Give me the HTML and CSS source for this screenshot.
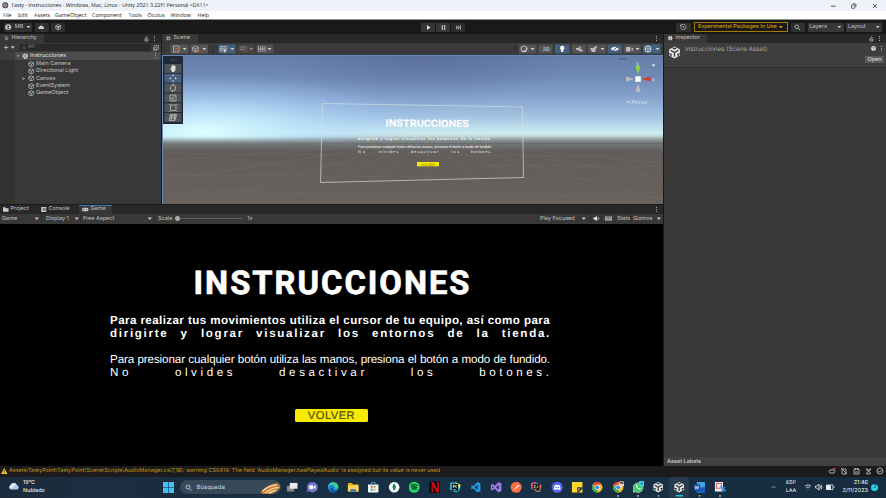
FILE: index.html
```html
<!DOCTYPE html>
<html lang="es">
<head>
<meta charset="utf-8">
<title>Tasty - Instrucciones</title>
<link rel="stylesheet" href="styles.css">
</head>
<body>
<svg class="defs" aria-hidden="true">
  <symbol id="cube" viewBox="0 0 14 14"><path d="M7 1.2 12.3 4v6L7 12.8 1.7 10V4ZM1.7 4 7 7l5.3-3M7 7v5.8" fill="none" stroke="currentColor" stroke-width="1.5"/></symbol>
  <symbol id="unity" viewBox="0 0 24 24"><path d="M12 1 22 6.5v11L12 23 2 17.500V6.500Z" fill="currentColor"/><path d="M12 12v8M12 12 5 8M12 12l7-4M9 3.500l3 2 3-2M2.500 14l3 1v4M21.500 14l-3 1v4" fill="none" stroke="var(--cut,#383838)" stroke-width="2.400"/></symbol>
  <symbol id="lock" viewBox="0 0 10 12"><path d="M2 6h6v4H2ZM3.500 6V3.500a1.800 1.800 0 0 1 3.500-.5" fill="none" stroke="currentColor" stroke-width="1.400"/></symbol>
  <symbol id="lens" viewBox="0 0 14 14"><circle cx="6" cy="6" r="4" fill="none" stroke="currentColor" stroke-width="1.600"/><path d="m9 9 4 4" stroke="currentColor" stroke-width="1.800"/></symbol>
  <symbol id="chrome" viewBox="0 0 24 24"><circle cx="12" cy="12" r="11" fill="#fbc116"/><path d="M12 12 2.500 6.500A11 11 0 0 1 21.500 6.500H12Z" fill="#ea4335"/><path d="M2.500 6.500A11 11 0 0 0 11 23l5-9-8 0Z" fill="#34a853"/><circle cx="12" cy="12" r="5.400" fill="#fff"/><circle cx="12" cy="12" r="4.200" fill="#4285f4"/></symbol>
</svg>

<header class="titlebar">
  <svg class="app-icon" viewBox="0 0 24 24"><circle cx="12" cy="12" r="11" fill="#333"/><path d="M12 5 18 8.500v7L12 19l-6-3.500v-7ZM12 12v7M6 8.500l6 3.500 6-3.500" stroke="#eee" stroke-width="2" fill="none"/></svg>
  <span class="app-title">Tasty - Instrucciones - Windows, Mac, Linux - Unity 2021.3.22f1 Personal &lt;DX11&gt;</span>
  <svg class="window-buttons" viewBox="0 0 50 10" fill="none" stroke="#333" stroke-width=".8"><path d="M2 5.200h4.600M44 3l4 4M48 3l-4 4"/><rect x="22.500" y="4" width="3.300" height="3.300" rx=".6"/><path d="M23.800 2.800h2.300q.8 0 .8.800v2.400"/></svg>
</header>
<nav class="menubar"><span>File</span><span>Edit</span><span>Assets</span><span>GameObject</span><span>Component</span><span>Tools</span><span>Oculus</span><span>Window</span><span>Help</span></nav>

<div class="toolbar">
  <div class="tb user"><svg viewBox="0 0 12 12"><circle cx="6" cy="6" r="5.500" fill="#c8c8c8"/><circle cx="6" cy="4.600" r="1.900" fill="#333"/><path d="M2.800 9.500q3.200-4 6.400 0" fill="#333"/></svg><span>MR</span><i class="caret"></i></div>
  <div class="tb cloud"><svg viewBox="0 0 14 10"><path d="M3 9a2.500 2.500 0 0 1 0-5 4 4 0 0 1 7.500-.5A2.800 2.800 0 0 1 11 9Z" fill="#d0d0d0"/></svg></div>
  <div class="tb vcs"><svg viewBox="0 0 14 14"><use href="#cube"/><circle cx="7" cy="7" r="2.500" fill="#bbb"/></svg></div>
  <div class="transport">
    <div><svg viewBox="0 0 10 10"><path d="M2 0 9 5 2 10Z" fill="#ddd"/></svg></div>
    <div><svg viewBox="0 0 10 10"><path d="M1.500 0h2.500v10H1.500ZM6 0h2.500v10H6Z" fill="#bbb"/></svg></div>
    <div class="dim"><svg viewBox="0 0 10 10"><path d="M0 0 4 5 0 10ZM4 0 8 5 4 10ZM8 0h2v10H8Z" fill="#9a9a9a"/></svg></div>
  </div>
  <div class="tb history"><svg viewBox="0 0 14 14" fill="none" stroke="#c4c4c4" stroke-width="1.500"><path d="M2 3a6 6 0 1 1-.8 5M1 1v4h4M7 4v3.500l3 1"/></svg></div>
  <div class="experimental"><span>Experimental Packages In Use</span><i class="caret"></i></div>
  <div class="tb search"><svg viewBox="0 0 14 14"><use href="#lens"/></svg></div>
  <div class="tb drop layers"><span>Layers</span><i class="caret"></i></div>
  <div class="tb drop layout"><span>Layout</span><i class="caret"></i></div>
</div>

<main class="editor">
  <div class="workspace">
    <div class="upper">
      <section class="hierarchy">
        <div class="tabs"><div class="tab hier-tab"><svg viewBox="0 0 12 10"><path d="M0 1.500h10M3 5h8M3 8.500h8" stroke="#bbb" stroke-width="1.500"/></svg><span>Hierarchy</span></div><svg class="lock"><use href="#lock"/></svg><i class="dots"></i></div>
        <div class="hier-bar"><b>+</b><i class="caret"></i><div class="field"><svg viewBox="0 0 14 14"><use href="#lens"/></svg><span>All</span></div><svg class="pick" viewBox="0 0 12 12" fill="none" stroke="#aaa" stroke-width="1.300"><path d="M3 1h8v8H3ZM1 4v7h7"/><circle cx="7" cy="5" r="1.800"/></svg></div>
        <div class="tree">
          <div class="row scene-row"><i class="fold down"></i><svg><use href="#unity"/></svg><span>Instrucciones</span><i class="dots"></i></div>
          <div class="row"><i class="fold"></i><svg><use href="#cube"/></svg><span>Main Camera</span></div>
          <div class="row"><i class="fold"></i><svg><use href="#cube"/></svg><span>Directional Light</span></div>
          <div class="row"><i class="fold right"></i><svg><use href="#cube"/></svg><span>Canvas</span></div>
          <div class="row"><i class="fold"></i><svg><use href="#cube"/></svg><span>EventSystem</span></div>
          <div class="row"><i class="fold"></i><svg><use href="#cube"/></svg><span>GameObject</span></div>
        </div>
      </section>
      <section class="scene">
        <div class="tabs"><div class="tab scene-tab"><svg viewBox="0 0 10 10"><path d="M0 3h10M0 7h10M3 0v10M7 0v10" stroke="#bbb" stroke-width="1.400"/></svg><span>Scene</span></div><i class="dots"></i></div>
        <div class="scene-bar">
          <svg class="left-tools" viewBox="0 0 110 10">
            <path d="M1 2v6M49 2v6" stroke="#292929"/>
            <path fill="#555" d="M6.500.5h18v9h-18ZM26.500.5H44v9H26.500Z"/><path fill="#46607c" d="M54.500.5h17v9h-17Z"/><path fill="#444" d="M73.500.5h17v9h-17Z"/><path fill="#505050" d="M92.500.5h17v9h-17Z"/>
            <g fill="none" stroke="#c4c4c4" stroke-width=".7"><rect x="9.500" y="2" width="5.500" height="6"/><path d="m31.500 2 2.800 1.500v3L31.500 8l-2.800-1.500v-3ZM28.700 3.500l2.800 1.500 2.800-1.500M31.500 5v3M56 2.500h6.500V6M56 2.500V7h3.500M58 2.500V7M60.200 2.500V5M56 4.700h5M94.500 2v6M101 2v6M96.800 2v6M98.800 2v6M94.500 5h6.500"/></g>
            <path d="M59.500 5.500h3.500L60.500 9Z" fill="#ddd"/><circle cx="12.300" cy="5" r="1.500" fill="#c0563b"/><circle cx="33.700" cy="7" r="1.400" fill="#d36a4c"/><path d="M77 2v5M79.500 2v4M82 2v3M75.500 3h7M75.500 5.500h5" stroke="#888" stroke-width=".6"/><path d="M80 5.500v1q1.400 2 2.800 0v-1" stroke="#a65542" fill="none"/>
            <path d="M18.600 4h4L20.600 6.300ZM38.300 4h4L40.300 6.300ZM66.300 4h4L68.300 6.300ZM103.500 4h4L105.500 6.300Z" fill="#ccc"/><path d="M85.300 4h4L87.300 6.300Z" fill="#888"/>
          </svg>
          <svg class="right-tools" viewBox="0 0 148 10">
            <path d="M1 2v6" stroke="#292929"/>
            <path d="M5 .5h17.500v9H5ZM24.500.5h14v9h-14ZM58 .5h14v9H58ZM73.500.5H92v9H73.500ZM109.500.5H127v9h-17.500Z" fill="#535353"/><path d="M41 .5h14.500v9H41ZM93.500.5h14.500v9H93.500ZM129 .5h17.500v9H129Z" fill="#46607c"/>
            <circle cx="10" cy="5" r="3" fill="none" stroke="#ccc" stroke-width=".8"/><path d="M8 7.200q4 .8 5-3.500" stroke="#ddd" fill="none"/>
            <text x="28.800" y="7">2D</text><circle cx="48.200" cy="4" r="2.200" fill="#fff"/><path d="M47.200 5.500h2V8h-2Z" fill="#fff"/>
            <path d="M62 4h2l2.500-1.800V8L64 6h-2Z" fill="#bbb"/><circle cx="67.500" cy="6.500" r="1.200" fill="#bbb"/><path d="M76 4h3l2-1.500 1 2.500-1 3h-3Z" fill="#bbb"/><circle cx="82" cy="3" r="1.100" fill="#bbb"/>
            <path d="M96.500 5q4.300-4.500 8.600 0-4.300 4-8.600 0Z" fill="#eee"/><path d="m98 8 6-6" stroke="#46607c" stroke-width="1"/><path d="M112 3h4.500v4.500H112Zm5 2 2-1.600v3.800Z" fill="#bbb"/><circle cx="134" cy="5" r="3" fill="none" stroke="#e3e8ee" stroke-width=".9"/><path d="M131 5h6M134 2v6" stroke="#e3e8ee" stroke-width=".6"/>
            <path d="M16.500 4h4L18.500 6.300ZM86.500 4h4L88.500 6.300ZM121.500 4h4L123.500 6.300ZM141.500 4h4L143.500 6.300Z" fill="#ccc"/>
          </svg>
        </div>
        <div class="viewport">
          <svg class="world" viewBox="163 55.500 501 150" preserveAspectRatio="none">
            <defs>
              <linearGradient id="sky" x1="0" y1="0" x2="0" y2="1"><stop offset="0" stop-color="#667da7"/><stop offset=".25" stop-color="#6f8ab6"/><stop offset=".5" stop-color="#87a5d0"/><stop offset=".7" stop-color="#a3c3e2"/><stop offset=".84" stop-color="#c3e4ee"/><stop offset=".89" stop-color="#cdebee"/><stop offset=".94" stop-color="#aebfc1"/><stop offset="1" stop-color="#747878"/></linearGradient>
              <radialGradient id="glow" gradientUnits="userSpaceOnUse" cx="0" cy="0" r="1" gradientTransform="translate(205 131) scale(210 58)"><stop offset="0" stop-color="#ddffff"/><stop offset=".35" stop-color="#c3ecff" stop-opacity=".75"/><stop offset="1" stop-color="#9cc9ff" stop-opacity="0"/></radialGradient>
              <radialGradient id="shade" gradientUnits="userSpaceOnUse" cx="0" cy="0" r="1" gradientTransform="translate(425 50) scale(150 55)"><stop offset="0" stop-color="#4a5e88" stop-opacity=".45"/><stop offset="1" stop-color="#4a5e88" stop-opacity="0"/></radialGradient>
              <linearGradient id="ground" x1="0" y1="0" x2="0" y2="1"><stop offset="0" stop-color="#747878"/><stop offset=".12" stop-color="#625d5a"/><stop offset="1" stop-color="#69625d"/></linearGradient>
              <linearGradient id="haze" x1="0" y1="0" x2="0" y2="1"><stop offset="0" stop-color="#8b9696" stop-opacity="0"/><stop offset="1" stop-color="#747878"/></linearGradient>
            </defs>
            <path fill="url(#sky)" d="M162 54h503v89H162Z"/><path fill="url(#glow)" d="M162 54h503v89H162Z"/><path fill="url(#shade)" d="M162 54h503v70H162Z"/><path fill="url(#haze)" d="M162 136h503v7H162Z"/><path fill="url(#ground)" d="M162 143h503v64H162Z"/>
            <g fill="none" stroke="#77716c" stroke-width=".5" opacity=".75"><path d="M162 160 380 145M162 180 390 145M190 206 400 145M270 206 410 145M345 206 418 145M430 206 428 145M510 206 436 145M590 206 445 145M665 200 455 145M665 178 465 145M665 163 480 145"/><path d="M162 153 665 156M162 163 665 166M162 174 665 179M162 190 665 197"/></g>
            <path d="M322.500 103 522.500 106.500 523.500 177 320.500 182Z" fill="none" stroke="#d6dde2" stroke-opacity=".75" stroke-width=".9"/>
            <g class="world-text">
              <text class="wt-title" x="385.500" y="126" textLength="83.500" lengthAdjust="spacingAndGlyphs" transform="rotate(.4 385 126)">INSTRUCCIONES</text>
              <text class="wt-bold faint" x="358" y="136" textLength="133" lengthAdjust="spacingAndGlyphs">Para realizar tus movimientos utiliza el cursor de tu equipo, así como para</text>
              <text class="wt-bold" x="358" y="139.500" textLength="133">dirigirte y lograr visualizar los entornos de la tienda.</text>
              <text x="358" y="147.800" textLength="134" lengthAdjust="spacingAndGlyphs">Para presionar cualquier botón utiliza las manos, presiona el botón a modo de fundido.</text>
              <text x="358" y="152" textLength="7">No</text><text x="379" y="152" textLength="19">olvides</text><text x="411" y="152" textLength="27">desactivar</text><text x="451" y="152" textLength="8">los</text><text x="471" y="152" textLength="21">botones.</text>
              <rect x="417" y="161.500" width="22" height="4.300" fill="#f7ea00"/><text class="wt-btn" x="421" y="165" textLength="14">VOLVER</text>
            </g>
          </svg>
          <svg class="tools" viewBox="0 0 20 68">
            <path d="M0 0h20v68H0Z" fill="#20283a"/><path d="M7 4h7" stroke="#484d5a"/>
            <path d="M1.500 8h17v8.900h-17ZM1.500 27.600h17v8.900h-17ZM1.500 37.400h17v8.900h-17ZM1.500 47.200h17v8.900h-17ZM1.500 57h17v8.900h-17Z" fill="#505356"/><path d="M1.500 17.800h17v8.900h-17Z" fill="#46607c"/>
            <path d="M7.300 12 8.500 11.800 8.500 9.500h1v-.7h1v.7h1v.6h1V14l-1.500 2H9Z" fill="#ddd"/>
            <path d="m10 18.500 1.200 1.600H8.800ZM10 26l1.200-1.600H8.800ZM6.200 22.200l1.600-1.200v2.400ZM13.800 22.200 12.200 21v2.400Z" fill="#e4e9ef"/>
            <g fill="none" stroke="#bbb" stroke-width=".8"><path d="M7.500 34V31q0-2 3-2M12.500 30v3q0 2-3 2M10 28l1.500 1-1.500 1M10 34l-1.500 1 1.500 1"/><path d="M7 39h6v6H7ZM7 42h3v3M10 41.500l2-2M7.500 49h5.500v5.500H7.500ZM6.500 48v1M14 48v1M6.500 55v1M14 55v1M7 60h6M6.500 62h6M9 58.500l-1 6M12 58.500l-1 6M7.500 58.500h6l-1.500 6H6Z"/></g>
          </svg>
          <svg class="gizmo" viewBox="0 0 50 52"><path d="M13 2.800h8" stroke="#4d5569"/><path d="m32 18-2.500-7.500q2.500-1.400 5 0Z" fill="#88dc35"/><path d="m36 23 8.500-2.600v5.200Z" fill="#db3921"/><path d="m28 23-8-2.600v5.200ZM32 27.500l-2.500 8q2.500 1 5 0Z" fill="#b9bdc1"/><path d="M29.300 20.300h5.500v5.500h-5.500Z" fill="#fff"/><path d="M46 8.200h3v2h-3Z" fill="#c7d4e5"/><text x="30" y="8.500">y</text><text x="46" y="25">x</text><path d="m24.500 45-4 1 4 1" fill="none" stroke="#d5e2ec" stroke-width=".6"/><text x="25.500" y="48" textLength="15.500" lengthAdjust="spacingAndGlyphs">Persp</text></svg>
        </div>
      </section>
    </div>
    <section class="game">
      <div class="tabs">
        <div class="tab-item project"><svg viewBox="0 0 12 10"><path d="M0 0h5l1 2h6v8H0Z" fill="#ccc"/></svg><span>Project</span></div>
        <div class="tab-item console"><svg viewBox="0 0 10 10"><path d="M0 0h10v10H0Z" fill="#ccc"/><path d="M3 3h6M3 5h6M3 7h6" stroke="#333"/></svg><span>Console</span></div>
        <div class="tab-item game-tab"><svg viewBox="0 0 14 10"><path d="M4 1h6a4 4 0 0 1 0 8H4a4 4 0 0 1 0-8Z" fill="#ccc"/><path d="M2.500 5h3M4 3.500v3M9 5h2.500" stroke="#333"/></svg><span>Game</span></div>
        <i class="dots"></i>
      </div>
      <div class="game-bar">
        <div class="gb g1"><span>Game</span><i class="caret"></i></div><div class="gb g2"><span>Display 1</span><i class="caret"></i></div><div class="gb g3"><span>Free Aspect</span><i class="caret"></i></div>
        <div class="scale"><span>Scale</span><div class="slider"><i></i></div><span>1x</span></div>
        <div class="gb g4"><span>Play Focused</span><i class="caret"></i></div>
        <div class="gb g5"><svg viewBox="0 0 14 10"><path d="M1 3h3l4-3v10L4 7H1Z" fill="#eee"/><path d="M10 2q3 3 0 6" stroke="#eee" stroke-width="1.500" fill="none"/></svg></div>
        <div class="gb g6"><svg viewBox="0 0 14 10"><path d="M0 1h14v8H0Z" fill="#bbb"/><path d="M1 3.500h12M1 6h12M4 1v5M7 1v5M10 1v5" stroke="#444" stroke-width=".8"/></svg></div>
        <div class="gb g7"><span>Stats</span></div><div class="gb g8"><span>Gizmos</span><i class="caret"></i></div>
      </div>
      <div class="game-view">
        <h1>INSTRUCCIONES</h1>
        <div class="copy">
          <p class="bold l1">Para realizar tus movimientos utiliza el cursor de tu equipo, así como para</p>
          <p class="bold l2">dirigirte y lograr visualizar los entornos de la tienda.</p>
          <p class="l3">Para presionar cualquier botón utiliza las manos, presiona el botón a modo de fundido.</p>
          <p class="l4">No olvides desactivar los botones.</p>
        </div>
        <div class="volver"><span>VOLVER</span></div>
      </div>
    </section>
  </div>
  <aside class="inspector">
    <div class="tabs"><div class="tab insp-tab"><svg viewBox="0 0 10 10"><circle cx="5" cy="5" r="4.800" fill="#ddd"/><path d="M5 2v1.500M5 4.500V8" stroke="#222" stroke-width="1.500"/></svg><span>Inspector</span></div><svg class="lock"><use href="#lock"/></svg><i class="dots"></i></div>
    <div class="asset">
      <svg class="asset-icon"><use href="#unity"/></svg>
      <span class="asset-name">Instrucciones (Scene Asset)</span>
      <div class="asset-side"><div class="asset-top"><svg viewBox="0 0 10 10"><circle cx="5" cy="5" r="4.800" fill="#ddd"/><path d="M3.500 4q0-1.500 1.500-1.500T6.500 4 5 6M5 7v1" stroke="#333" fill="none"/></svg><i class="dots"></i></div><div class="open">Open</div></div>
    </div>
    <div class="labels">Asset Labels</div>
  </aside>
</main>

<div class="status">
  <svg class="warn" viewBox="0 0 12 12"><path d="M6 0 12 11H0Z" fill="#ffc61a"/><path d="M6 3.500v4M6 8.500V10" stroke="#222" stroke-width="1.300"/></svg>
  <span>Assets\TastyPoint\TastyPoint\Scene\Scripts\AudioManager.cs(7,18): warning CS0414: The field 'AudioManager.hasPlayedAudio' is assigned but its value is never used</span>
  <svg class="status-icons" viewBox="0 0 56 10" fill="none" stroke="#bcbcbc" stroke-width=".9"><ellipse cx="4" cy="5.500" rx="3" ry="1.700"/><circle cx="6.300" cy="2.800" r="1.100" fill="#e2493d" stroke="none"/><path d="M14 3h4v5h-4ZM13 2l6 6M26 3h5v5h-5ZM27.500 2v2M29.500 2v2M27 6h3M38 2l5 6M43 2l-5 6M38 4h5M39 8h3"/><circle cx="52" cy="5" r="3"/><path d="m50.500 5 1 1.200 2-2.200"/></svg>
</div>

<footer class="taskbar">
  <svg class="weather" viewBox="0 0 24 16"><path d="M5 15a5 5 0 0 1 0-9 7 7 0 0 1 13 0 5 5 0 0 1 1 9Z" fill="#a9c8f2"/><path d="M6 13a4 4 0 0 1 0-7 6 6 0 0 1 10-1Z" fill="#e7f0fc"/></svg>
  <div class="temp"><span>19°C</span><span>Nublado</span></div>
  <svg class="start" viewBox="0 0 12 12"><path d="M0 0h5.700v5.700H0ZM6.300 0H12v5.700H6.300ZM0 6.300h5.700V12H0ZM6.300 6.300H12V12H6.300Z" fill="#43c2f3"/></svg>
  <div class="searchbox"><svg viewBox="0 0 14 14"><use href="#lens"/></svg><span>Búsqueda</span><svg class="food" viewBox="0 0 22 12"><path d="M0 10Q8 1 18 0q5 2 3 6L13 12H3Z" fill="#c27a3c"/><path d="M2 9Q10 2 18 2M5 11Q12 5 20 5M9 11q5-3 9-3" stroke="#ffe2a5" stroke-width="1.500" fill="none"/></svg></div>
  <div class="apps">
    <svg viewBox="0 0 24 24"><path d="M1 9h15v12H1Z" fill="#85898d"/><path d="M7 3h16v12H7Z" fill="#e9e9e9"/></svg>
    <svg viewBox="0 0 24 24"><path d="M12 1a11 11 0 1 1-7 19l-4 3 1-7A11 11 0 0 1 12 1Z" fill="#7577ca"/><rect x="6" y="8" width="8" height="8" rx="2" fill="#fff"/><path d="m15 11 4-3v8l-4-3Z" fill="#fff"/></svg>
    <svg viewBox="0 0 24 24"><circle cx="12" cy="12" r="11" fill="#1684d1"/><path d="M2 8A11 11 0 0 1 23 11q-1 6-8 5 3-8-6-8-4 0-7 3Z" fill="#42cf87"/><path d="M2 8Q9 0 18 6 7 3 2 13Z" fill="#34b6dc"/><path d="M10 12q0 8 11 7-8 8-14 0-2-4 3-7Z" fill="#164f9b"/></svg>
    <svg viewBox="0 0 24 24"><path d="M1 3h8l3 3h11v15H1Z" fill="#e9a51b"/><path d="M1 8h22v13H1Z" fill="#ffd557"/><path d="M6 16h12v5H6Z" fill="#277ec7"/></svg>
    <svg viewBox="0 0 24 24"><path d="M8 7V2h8v5" fill="none" stroke="#32a7e8" stroke-width="2"/><path d="M1 6h22v15q0 2-2 2H3q-2 0-2-2Z" fill="#f1f5f7"/><path d="M7 9h4v4H7Z" fill="#f05423"/><path d="M13 9h4v4h-4Z" fill="#7eb93b"/><path d="M7 15h4v4H7Z" fill="#20a4dd"/><path d="M13 15h4v4h-4Z" fill="#f6bb25"/></svg>
    <svg viewBox="0 0 24 24"><circle cx="12" cy="12" r="11" fill="#fff"/><path d="M12 4q7 8 0 14-7-6 0-14Z" fill="#11805a"/><path d="M12 17v4" stroke="#555"/></svg>
    <svg viewBox="0 0 24 24"><circle cx="12" cy="12" r="11.500" fill="#21d365"/><path d="M5 8q8-3 14 1M6 12q7-2 12 1M7 16q6-2 10 1" fill="none" stroke="#14231b" stroke-width="2.200"/></svg>
    <svg viewBox="0 0 24 24"><path d="M0 0h24v24H0Z" fill="#090909"/><path d="M6 1v22M18 1v22" stroke="#b20710" stroke-width="4"/><path d="m4 1 4 0 12 22h-5Z" fill="#e50914"/></svg>
    <svg viewBox="0 0 24 24"><path d="M2 2h13l8 6-2 10-7 5L1 17Z" fill="#23c7ca"/><path d="m12 1 11 6-1 8Z" fill="#f2e64a"/><path d="M5 5h13v14H5Z" fill="#080808"/><path d="M8 8h3v3H8V8v6M16 8h-3v5h3M7 17h6" fill="none" stroke="#fff" stroke-width="1.300"/></svg>
    <svg viewBox="0 0 24 24"><path d="m17 1 6 3v16l-6 3L3 10l2-2 12 9V7L5 16l-2-2Z" fill="#239be3"/></svg>
    <svg viewBox="0 0 24 24"><path d="m17 1 6 3v16l-6 3-8-8-5 4-3-2V7l3-2 5 4ZM17 7l-5 5 5 5ZM4 9v6l3-3Z" fill="#a67ae4"/></svg>
    <svg viewBox="0 0 24 24"><circle cx="12" cy="12" r="11.500" fill="#fa6d3c"/><path d="m6 18 10-11 3 2L7 18Z" fill="#fff"/></svg>
    <svg viewBox="0 0 24 24"><path d="m1 3 10-2 12 7-3 14-9-1L1 15Z" fill="#198ae5"/><path d="m1 3 9-2 3 7-10 9Z" fill="#f24d61"/><path d="m14 3 9 5-3 14-9-1Z" fill="#ec7542"/><path d="M5 5h14v14H5Z" fill="#111"/><path d="M7 8h4M9 8v5M7 13h4M15 8v5h-2M7 17h6" stroke="#fff" stroke-width="1.300" fill="none"/></svg>
    <svg viewBox="0 0 24 24"><circle cx="12" cy="12" r="11.500" fill="#5865f2"/><path d="M7 8q5-2 10 0 2 4 2 8l-4 2-1-2h-4l-1 2-4-2q0-4 2-8Z" fill="#fff"/><circle cx="9.500" cy="12.500" r="1.500" fill="#5865f2"/><circle cx="14.500" cy="12.500" r="1.500" fill="#5865f2"/></svg>
    <svg viewBox="0 0 24 24"><path d="M1 1h22v22H1Z" fill="#ffd629"/><path d="M12 12h11v3l-8 8h-3Z" fill="#2c3b46"/><path d="M18 15h-3v5" stroke="#fff" fill="none"/></svg>
    <svg viewBox="0 0 24 24"><use href="#chrome"/></svg>
    <svg class="open-app" viewBox="0 0 24 24"><use href="#chrome"/><circle cx="19" cy="5" r="6" fill="#ead7c6"/><path d="M14 4q5-8 10 0l-2 1-5-1Z" fill="#65402f"/></svg>
    <svg class="open-app" viewBox="0 0 24 24"><path d="M11 3a10 10 0 1 1-5 18l-5 2 1-6A10 10 0 0 1 11 3Z" fill="#34cf60" stroke="#fff"/><path d="M7 8q1 8 8 9l3-3-3-1-2 1-3-3 1-2-2-3Z" fill="#fff"/><circle cx="20" cy="4" r="7" fill="#37d3de"/><path d="M18 2v4M21 2v4" stroke="#124"/></svg>
    <svg class="open-app unity-app" viewBox="0 0 24 24"><use href="#unity"/></svg>
    <svg class="open-app unity-app active" viewBox="0 0 24 24"><use href="#unity"/></svg>
    <svg class="open-app" viewBox="0 0 24 24"><path d="M7 1h17v22H7Z" fill="#41a5ee"/><path d="M7 12h17v11H7Z" fill="#185abd"/><path d="M0 6h14v13H0Z" fill="#174ea6"/><path d="m3 9 2 7 2-6 2 6 2-7" stroke="#fff" stroke-width="1.400" fill="none"/></svg>
    <svg class="open-app" viewBox="0 0 24 24"><path d="M1 1h17v20H1Z" fill="#e8eef4"/><rect x="4" y="4" width="11" height="10" fill="none" stroke="#e85a42" stroke-width="2"/><path d="m12 10 11 9-4 2M22 11l-8 10" stroke="#3394d8" stroke-width="2.500" fill="none"/></svg>
  </div>
  <svg class="chevron" viewBox="0 0 6 4"><path d="m.5 3.500 2.500-2.500 2.500 2.500" fill="none" stroke="#ddd" stroke-width=".8"/></svg>
  <div class="lang"><span>ESP</span><span>LAA</span></div>
  <svg class="tray" viewBox="0 0 32 10" fill="none" stroke="#eee" stroke-width=".8"><path d="M1 4.200q3-3 6 0M2.300 5.700q1.700-1.600 3.400 0M4 7v.8M11.500 4h1.500l2-1.800v6L13 6h-1.500ZM16 3.500q1 1.500 0 3M17.200 2.700q1.600 2.400 0 4.800M22.500 3h6.500v4.500h-6.500ZM30 4.500v1.500"/><path d="M22.500 3.500h4V7.500h-4Z" fill="#eee"/></svg>
  <div class="clock"><span>21:46</span><span>2/11/2023</span></div>
  <div class="badge">3</div>
</footer>
</body>
</html>
```
FILE: styles.css
```css
* { box-sizing: border-box; }
html, body { margin: 0; height: 498px; overflow: hidden; }
body { width: 886px; display: flex; flex-direction: column; background: #191919; color: #c4c4c4; font: 5.5px/1 Inter, "Liberation Sans", sans-serif; white-space: nowrap; text-rendering: geometricPrecision; }
svg { display: block; flex: none; }
.defs { position: absolute; width: 0; height: 0; }
i { flex: none; }
.caret { width: 4.400px; height: 2.600px; background: #c4c4c4; clip-path: polygon(0 0, 100% 0, 50% 100%); }
.dots { width: 1.2px; height: 5px; background: repeating-linear-gradient(#aaa 0 1px, transparent 1px 2px); }
.titlebar span, .menubar span, .toolbar span, .tabs span, .field span, .row span, .game-bar span, .status span, .searchbox span { padding-top: 1.300px; }

.titlebar { height: 11px; flex: none; display: flex; align-items: center; background: #eef3f9; color: #222; padding-left: 2px; }
.app-icon { width: 6.500px; height: 6.500px; }
.app-title { margin-left: 2.500px; font: 5.400px/1 "Open Sans", sans-serif; letter-spacing: -.04px; }
.window-buttons { width: 50px; height: 10px; margin-left: auto; margin-right: 7px; }
.menubar { height: 9px; flex: none; display: grid; grid-template-columns: 15px 16px 21px 37px 36.500px 19px 23px 27px 20px; align-items: center; background: #fff; border-bottom: 1px solid #8e9291; color: #222; padding-left: 3px; font-family: "Open Sans", sans-serif; font-size: 5.400px; }

.toolbar { height: 14px; flex: none; display: flex; align-items: center; padding-left: 4px; background: #191919; }
.tb { height: 9px; display: flex; align-items: center; justify-content: center; background: #303030; border-radius: 1px; }
.tb svg { width: 6.500px; height: 6.500px; }
.user { width: 28px; gap: 3px; }
.cloud { width: 14px; margin-left: 2.500px; }
.vcs { width: 14px; margin-left: 2.500px; }
.transport { display: flex; gap: 1px; margin-left: 356px; }
.transport div { width: 14px; height: 9px; background: #363636; display: flex; align-items: center; justify-content: center; }
.transport .dim { background: #2a2a2a; }
.transport svg { width: 5px; height: 5px; }
.history { width: 15px; margin-left: 211px; }
.experimental { width: 94px; height: 9.500px; margin-left: 2.500px; border: 1px solid #a87b09; display: flex; align-items: center; justify-content: center; gap: 2px; color: #e5a90e; background: #1c1a14; }
.experimental .caret { background: #e5a90e; }
.search { width: 14px; margin-left: 3px; }
.drop { justify-content: space-between; padding: 0 2px; background: #383838; }
.layers { width: 36px; margin-left: 3px; }
.layout { width: 36px; margin-left: 2.500px; }

.editor { height: 432px; flex: none; display: flex; }
.workspace { width: 663px; display: flex; flex-direction: column; }
.upper { height: 171px; display: flex; background: #191919; gap: 1px; flex: none; }
.hierarchy { width: 161px; height: 170px; background: #383838; }
.scene { width: 501px; height: 170px; overflow: hidden; }
.tabs { height: 9px; background: #282828; display: flex; align-items: center; }
.tab { height: 9px; display: flex; align-items: center; background: #383838; gap: 3px; padding-left: 4px; }
.tab svg { width: 4.500px; height: 4.500px; }
.tabs .lock { width: 5px; height: 6px; }
.tabs > .dots { margin: 0 6px 0 5px; }
.hier-tab { width: 44px; margin-right: auto; }
.hier-bar { height: 9px; display: flex; align-items: center; padding-left: 3px; }
.hier-bar b { font: 9px/8px Inter, sans-serif; width: 6px; }
.hier-bar .caret { margin-left: 1.500px; }
.field { width: 131px; height: 7px; margin-left: 5px; padding-left: 2px; background: #2a2a2a; display: flex; align-items: center; gap: 2px; color: #777; border-radius: 2px; }
.field svg { width: 4px; height: 4px; }
.pick { width: 6px; height: 6px; margin-left: 2px; }
.tree { height: 152px; background: linear-gradient(90deg, #313131 15px, #383838 15px); }
.row { height: 7.400px; display: flex; align-items: center; padding-left: 22px; }
.row svg { width: 6.500px; height: 6.500px; margin: 0 1.500px 0 2px; }
.scene-row { height: 7.800px; margin-bottom: .4px; padding-left: 16px; background: linear-gradient(90deg, #3d3d3d 15px, #4d4d4d 15px); color: #e0e0e0; }
.scene-row span { letter-spacing: .08px; }
.scene-row .dots { margin: 0 5px 0 auto; }
.fold { width: 4px; height: 4px; }
.fold.down { height: 2.800px; background: #888; clip-path: polygon(0 0, 100% 0, 50% 100%); }
.fold.right { background: #888; clip-path: polygon(10% 0, 80% 50%, 10% 100%); }

.scene-tab { width: 36px; margin-right: auto; }
.scene-bar { height: 11.500px; display: flex; align-items: center; justify-content: space-between; background: #3a3a3a; padding: 0 1px 0 2px; }
.left-tools { width: 110px; height: 10px; }
.right-tools { width: 148px; height: 10px; }
.right-tools text { font-size: 5px; fill: #bbb; font-weight: 700; }
.viewport { position: relative; height: 150px; border-left: 1px solid #638abc; border-top: 1px solid #638abc; }
.world { width: 501px; height: 150px; }
.tools { position: absolute; left: 0; top: 0; width: 20px; height: 68px; }
.gizmo { position: absolute; left: 442.500px; top: 0; width: 50px; height: 52px; }
.gizmo text { font-size: 5px; fill: #d5e2ec; }
.world-text text { font: 3.700px "Liberation Sans", sans-serif; fill: #fff; }
.world-text .wt-title { font: 700 10px Roboto, sans-serif; stroke: #fff; stroke-width: .1; }
.world-text .wt-bold { font-weight: 700; fill: #f4ffff; }
.world-text .faint { fill-opacity: .3; }
.world-text .wt-btn { fill: #706b00; font-size: 3.500px; }

.game { height: 261px; }
.tab-item { height: 9px; display: flex; align-items: center; gap: 2px; padding-left: 3px; }
.tab-item svg { width: 5.500px; height: 5px; }
.project { width: 38px; }
.console { width: 41px; }
.game-tab { width: 33px; background: #383838; box-shadow: inset 0 1px #3a7ab0; margin-right: auto; }
.game-tab svg { width: 6.500px; }
.game-bar { height: 9.500px; display: flex; align-items: center; background: #383838; }
.gb { height: 9px; display: flex; align-items: center; justify-content: space-between; padding: 0 2px; border-right: 1px solid #2e2e2e; }
.gb svg { width: 7px; height: 5px; margin: auto; }
.g1 { width: 42px; }
.g2 { width: 39px; padding: 0 1px 0 4px; }
.g3 { width: 74px; }
.scale { width: 382px; display: flex; align-items: center; padding-left: 3px; }
.slider { width: 68px; height: 1px; margin: 0 4px 0 3px; background: #5e5e5e; display: flex; align-items: center; }
.slider i { width: 5px; height: 5px; border-radius: 50%; background: #aaa; }
.g4 { width: 54px; padding-right: 4px; border-left: 1px solid #2e2e2e; }
.g5 { width: 11px; }
.g6 { width: 13px; }
.g7 { width: 17px; }
.g8 { width: 31px; border-right: 0; padding-left: 1px; }

.game-view { height: 242.500px; background: #000; color: #fff; display: flex; flex-direction: column; align-items: center; }
h1 { margin: 43px 0 0; padding-left: 2px; font: 700 32.700px/32px Roboto, sans-serif; letter-spacing: 2px; -webkit-text-stroke: .7px #fff; }
.copy { width: 440px; margin-top: 15.100px; margin-right: 3px; font: 11.600px/13.200px "Liberation Sans", Arial, sans-serif; }
.copy p { margin: 0; height: 13.200px; text-align: justify; text-align-last: justify; }
.bold { font-weight: 700; }
.copy .l1 { letter-spacing: .400px; }
.copy .l2 { letter-spacing: 1.700px; margin: 0 -1px 13.200px 0; }
.copy .l3 { letter-spacing: -.1px; }
.copy .l4 { letter-spacing: 3.600px; margin-right: -2.500px; }
.volver { width: 73px; height: 13px; margin-top: 29.800px; background: #f7ea00; border-radius: 1.500px; color: #4b4813; font: 11.200px/14px "Liberation Sans", Arial, sans-serif; letter-spacing: .45px; text-align: center; -webkit-text-stroke: .15px #4b4813; }

.inspector { width: 223px; background: #383838; border-left: 1px solid #191919; display: flex; flex-direction: column; }
.insp-tab { width: 43px; margin-right: auto; }
.asset { height: 25px; flex: none; background: #3e3e3e; border-bottom: 1px solid #2b2b2b; display: flex; padding: 3px 2px 0 4px; }
.asset-icon { width: 13px; height: 13px; color: #e8e8e8; }
.asset-name { margin: 0 0 0 4px; font-size: 6.200px; line-height: 7px; color: #a9a9a9; }
.asset-side { margin-left: auto; display: flex; flex-direction: column; align-items: flex-end; gap: 5px; }
.asset-top { display: flex; gap: 5px; padding-right: 2px; }
.asset-top svg { width: 5px; height: 5px; }
.open { width: 19px; height: 7px; background: #585858; line-height: 8px; text-align: center; color: #e0e0e0; }
.labels { height: 9px; margin-top: auto; padding-left: 3px; line-height: 10px; font-weight: 600; background: #404040; }

.status { height: 10.500px; flex: none; display: flex; align-items: center; padding: 0 2px 0 1px; background: #1b1b1b; color: #c39719; }
.warn { width: 6.500px; height: 6.500px; margin-right: 1.500px; }
.status-icons { width: 56px; height: 10px; margin-left: auto; }

.taskbar { height: 21.500px; flex: none; display: flex; align-items: center; background: linear-gradient(90deg, #1c2c3d, #172f45 50%, #182c40); color: #fff; padding-left: 8px; }
.weather { width: 12px; height: 8px; margin-bottom: 2px; }
.temp { width: 140px; margin-left: 3px; padding-top: 1px; display: flex; flex-direction: column; gap: 2px; }
.start { width: 11px; height: 11px; }
.searchbox { width: 101px; height: 14px; margin-left: 6px; padding-left: 5px; border-radius: 7px; background: #364959; display: flex; align-items: center; color: #d3d9df; }
.searchbox > svg { width: 7px; height: 7px; margin-right: 4.500px; }
.searchbox span { font-size: 6px; }
.searchbox .food { width: 21px; height: 11px; margin: 2px 0 0 auto; }
.apps { display: flex; margin-left: 1px; }
.apps svg { width: 20.360px; height: 21px; padding: 4.500px 4.400px 5px; }
.open-app { background: radial-gradient(circle at 50% 18.800px, #8d98a2 .8px, transparent 1.300px); }
.unity-app { --cut: #25313e; color: #e5e5e5; }
.apps .active { background: linear-gradient(#2dc3dd, #2dc3dd) 50% 18.500px / 7px 1.500px no-repeat, #283a4b; border-radius: 2px; }
.chevron { width: 5px; height: 4px; margin-left: 41px; }
.lang { width: 16px; margin-left: 7px; padding-top: 1px; display: flex; flex-direction: column; align-items: center; gap: 2.200px; font-size: 5.300px; }
.tray { width: 32px; height: 10px; margin-left: 5px; }
.clock { width: 32px; padding-top: 1px; display: flex; flex-direction: column; align-items: flex-end; gap: 2.200px; }
.badge { width: 7px; height: 7px; margin-left: 3.500px; border-radius: 50%; background: #26d5ef; color: #123; font-size: 5px; line-height: 7px; text-align: center; }
```
